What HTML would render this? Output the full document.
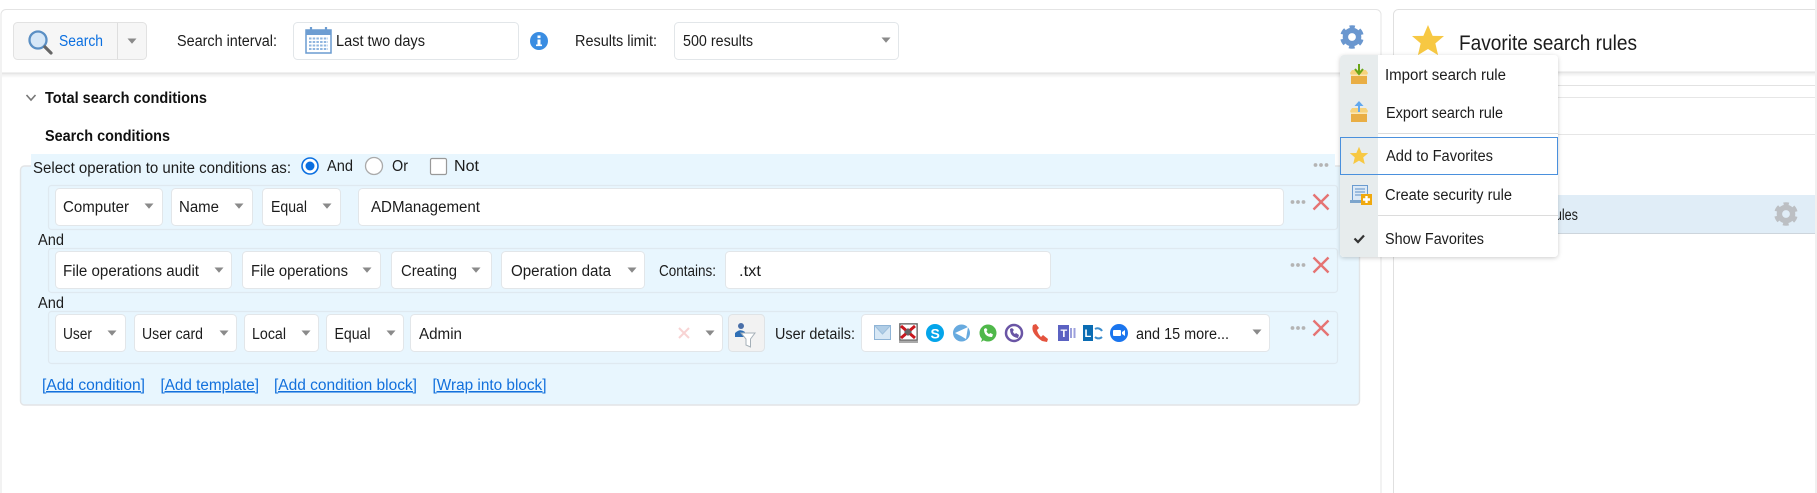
<!DOCTYPE html>
<html><head><meta charset="utf-8"><style>
html,body{margin:0;padding:0;background:#fff;width:1817px;height:493px;overflow:hidden}
svg{display:block}
text{font-family:"Liberation Sans",sans-serif;font-size:15.5px;fill:#1c1c1c}
.b{font-weight:bold;fill:#111}
.l{fill:#1270dc;text-decoration:underline}
.s{fill:#fff;stroke:#e2e6e9;stroke-width:1}
.a{fill:#8a8a8a}
.r{fill:#e8f6fe;stroke:#dfe9f0;stroke-width:1.200}
</style></head><body>
<svg width="1817" height="493" viewBox="0 0 1817 493" xmlns="http://www.w3.org/2000/svg">
<defs>
<linearGradient id="sh" x1="0" y1="0" x2="0" y2="1"><stop offset="0" stop-color="#e8e8e8"/><stop offset="1" stop-color="#fff"/></linearGradient>
<filter id="ms" x="-10%" y="-10%" width="120%" height="120%"><feDropShadow dx="0" dy="1" stdDeviation="2" flood-color="#000" flood-opacity=".2"/></filter>
<polygon id="star" points="0,-10 2.9,-3.2 10,-3.1 4.6,1.5 6.3,8.8 0,5 -6.3,8.8 -4.6,1.5 -10,-3.1 -2.9,-3.2"/>
<g id="gear"><circle r="6.6" fill="none" stroke-width="5.4" stroke="currentColor"/><circle r="10" fill="none" stroke-width="3.6" stroke="currentColor" stroke-dasharray="5.6 4.87" stroke-dashoffset="2.8" transform="rotate(-90)"/></g>
<g id="x"><path d="M-7.5-7.5L7.5 7.5M7.5-7.5L-7.5 7.5" stroke="#e57373" stroke-width="2.4" fill="none"/></g>
<g id="d"><circle cx="-5.5" r="1.9" fill="#b4b4b4"/><circle r="1.9" fill="#b4b4b4"/><circle cx="5.5" r="1.9" fill="#b4b4b4"/></g>
<polygon id="ar" points="-4.5,-2.5 4.5,-2.5 0,2.8" class="a"/>
<g id="box"><path d="M-9-3L-7-6H7L9-3L8-1H-8Z" fill="#f6d27c"/><rect x="-8" y="-1" width="16" height="9" fill="#e9ae45"/><rect x="-8" y="-1.5" width="16" height="1.5" fill="#fbe6b4"/></g>
</defs>

<!-- left panel -->
<rect x="1" y="9.5" width="1380" height="500" rx="5" fill="#fff" stroke="#e4e4e4"/>
<rect x="2" y="73" width="1378" height="5" fill="url(#sh)"/>
<line x1="2" y1="73" x2="1380" y2="73" stroke="#e0e0e0"/>

<!-- right panel -->
<rect x="1393.5" y="9.5" width="440" height="500" rx="5" fill="#fff" stroke="#e0e0e0"/>
<rect x="1394" y="72" width="421" height="5" fill="url(#sh)"/>
<line x1="1394" y1="72" x2="1815" y2="72" stroke="#e0e0e0"/>
<line x1="1394" y1="85.500" x2="1815" y2="85.500" stroke="#e2e2e2"/>
<line x1="1394" y1="97.500" x2="1815" y2="97.500" stroke="#e6e6e6"/>
<line x1="1394" y1="134.500" x2="1815" y2="134.500" stroke="#e6e6e6"/>
<rect x="1394" y="195" width="421" height="38" fill="#e0edf7"/>
<line x1="1394" y1="233.500" x2="1815" y2="233.500" stroke="#cdd5dc"/>
<rect x="1815" y="0" width="2" height="493" fill="#f0f0f0"/>
<use href="#star" transform="translate(1428,41) scale(1.6)" fill="#f7c843"/>
<text x="1459" y="50" style="font-size:21px" textLength="178" lengthAdjust="spacingAndGlyphs">Favorite search rules</text>
<text x="1531" y="220" textLength="47" lengthAdjust="spacingAndGlyphs">les rules</text>
<use href="#gear" transform="translate(1786,214)" style="color:#bcbfc3"/>

<!-- toolbar -->
<rect x="13.500" y="22.500" width="133" height="37" rx="4" fill="#f6f6f6" stroke="#e2e2e2"/>
<line x1="117.500" y1="23" x2="117.500" y2="59" stroke="#dedede"/>
<circle cx="38" cy="40" r="8.500" fill="#d6e7f7" stroke="#5a8fc4" stroke-width="2.300"/>
<path d="M45 47L51 53" stroke="#666" stroke-width="3.200" stroke-linecap="round"/>
<text x="59" y="46" style="fill:#0b6fe0" textLength="44" lengthAdjust="spacingAndGlyphs">Search</text>
<use href="#ar" x="132" y="41"/>
<text x="177" y="46" textLength="100" lengthAdjust="spacingAndGlyphs">Search interval:</text>
<rect x="293.500" y="22.500" width="225" height="37" rx="4" class="s"/>
<rect x="306" y="30" width="25" height="23" fill="#fff" stroke="#6a9bd0" stroke-width="1.500"/>
<rect x="306" y="30" width="25" height="5" fill="#6d9dd2"/>
<path d="M311 27V33M326 27V33" stroke="#6d9dd2" stroke-width="2.200"/>
<path d="M309 38.500H328M309 42H328M309 45.500H328M309 49H328" stroke="#8fb5df" stroke-width="2" stroke-dasharray="2.500 1.200"/>
<text x="336" y="46" textLength="89" lengthAdjust="spacingAndGlyphs">Last two days</text>
<circle cx="539" cy="41" r="9" fill="#3a8de2"/>
<rect x="537.500" y="39.500" width="3" height="6.500" fill="#fff"/><rect x="537.500" y="35.500" width="3" height="2.600" fill="#fff"/><rect x="536" y="44.500" width="6" height="1.600" fill="#fff"/>
<text x="575" y="46" textLength="82" lengthAdjust="spacingAndGlyphs">Results limit:</text>
<rect x="674.500" y="22.500" width="224" height="37" rx="4" class="s"/>
<text x="683" y="46" textLength="70" lengthAdjust="spacingAndGlyphs">500 results</text>
<use href="#ar" x="886" y="40"/>
<use href="#gear" transform="translate(1352,37)" style="color:#6a97cf"/>

<!-- headers -->
<path d="M26.500 95L31 100L35.500 95" stroke="#777" stroke-width="1.600" fill="none"/>
<text x="45" y="103" class="b" textLength="162" lengthAdjust="spacingAndGlyphs">Total search conditions</text>
<text x="45" y="141" class="b" textLength="125" lengthAdjust="spacingAndGlyphs">Search conditions</text>

<!-- conditions panel -->
<rect x="20.500" y="166" width="1339" height="239" rx="4" fill="#e8f6fe" stroke="#e2e4e6" stroke-width="1.400"/>
<rect x="31" y="154" width="1304" height="14" fill="#e8f6fe"/>
<text x="33" y="173" textLength="258" lengthAdjust="spacingAndGlyphs">Select operation to unite conditions as:</text>
<circle cx="310" cy="166" r="8" fill="#fff" stroke="#0b6fe0" stroke-width="1.600"/><circle cx="310" cy="166" r="4.500" fill="#0b6fe0"/>
<text x="327" y="171" textLength="26" lengthAdjust="spacingAndGlyphs">And</text>
<circle cx="374" cy="166" r="8.500" fill="#fff" stroke="#aaa" stroke-width="1.300"/>
<text x="392" y="171" textLength="16" lengthAdjust="spacingAndGlyphs">Or</text>
<rect x="430.500" y="158.500" width="16" height="16" rx="1.500" fill="#fff" stroke="#999" stroke-width="1.200"/>
<text x="454" y="171" textLength="25" lengthAdjust="spacingAndGlyphs">Not</text>
<use href="#d" x="1321" y="165"/>

<!-- row 1 -->
<rect x="48.500" y="185.500" width="1289" height="44" rx="3" class="r"/>
<rect x="55.500" y="188.500" width="107" height="37" rx="4" class="s"/><text x="63" y="212" textLength="66" lengthAdjust="spacingAndGlyphs">Computer</text><use href="#ar" x="149" y="206"/>
<rect x="171.500" y="188.500" width="81" height="37" rx="4" class="s"/><text x="179" y="212" textLength="40" lengthAdjust="spacingAndGlyphs">Name</text><use href="#ar" x="239" y="206"/>
<rect x="262.500" y="188.500" width="78" height="37" rx="4" class="s"/><text x="271" y="212" textLength="36" lengthAdjust="spacingAndGlyphs">Equal</text><use href="#ar" x="327" y="206"/>
<rect x="358.500" y="188.500" width="925" height="37" rx="4" class="s"/><text x="371" y="212" textLength="109" lengthAdjust="spacingAndGlyphs">ADManagement</text>
<use href="#d" x="1298" y="202"/><use href="#x" x="1321" y="202"/>
<text x="38" y="245" textLength="26" lengthAdjust="spacingAndGlyphs">And</text>

<!-- row 2 -->
<rect x="48.500" y="248.500" width="1289" height="44" rx="3" class="r"/>
<rect x="55.500" y="251.500" width="176" height="37" rx="4" class="s"/><text x="63" y="276" textLength="136" lengthAdjust="spacingAndGlyphs">File operations audit</text><use href="#ar" x="219" y="270"/>
<rect x="242.500" y="251.500" width="138" height="37" rx="4" class="s"/><text x="251" y="276" textLength="97" lengthAdjust="spacingAndGlyphs">File operations</text><use href="#ar" x="367" y="270"/>
<rect x="391.500" y="251.500" width="100" height="37" rx="4" class="s"/><text x="401" y="276" textLength="56" lengthAdjust="spacingAndGlyphs">Creating</text><use href="#ar" x="476" y="270"/>
<rect x="501.500" y="251.500" width="143" height="37" rx="4" class="s"/><text x="511" y="276" textLength="100" lengthAdjust="spacingAndGlyphs">Operation data</text><use href="#ar" x="632" y="270"/>
<text x="659" y="276" textLength="57" lengthAdjust="spacingAndGlyphs">Contains:</text>
<rect x="725.500" y="251.500" width="325" height="37" rx="4" class="s"/><text x="739" y="276" textLength="22" lengthAdjust="spacingAndGlyphs">.txt</text>
<use href="#d" x="1298" y="265"/><use href="#x" x="1321" y="265"/>
<text x="38" y="308" textLength="26" lengthAdjust="spacingAndGlyphs">And</text>

<!-- row 3 -->
<rect x="48.500" y="311.500" width="1289" height="52" rx="3" class="r"/>
<rect x="55.500" y="314.500" width="70" height="37" rx="4" class="s"/><text x="63" y="339" textLength="29" lengthAdjust="spacingAndGlyphs">User</text><use href="#ar" x="112" y="333"/>
<rect x="134.500" y="314.500" width="102" height="37" rx="4" class="s"/><text x="142" y="339" textLength="61" lengthAdjust="spacingAndGlyphs">User card</text><use href="#ar" x="224" y="333"/>
<rect x="244.500" y="314.500" width="74" height="37" rx="4" class="s"/><text x="252" y="339" textLength="34" lengthAdjust="spacingAndGlyphs">Local</text><use href="#ar" x="306" y="333"/>
<rect x="326.500" y="314.500" width="77" height="37" rx="4" class="s"/><text x="334.500" y="339" textLength="36" lengthAdjust="spacingAndGlyphs">Equal</text><use href="#ar" x="391" y="333"/>
<rect x="410.500" y="314.500" width="312" height="37" rx="4" class="s"/><text x="419" y="339" textLength="43" lengthAdjust="spacingAndGlyphs">Admin</text>
<path d="M679 328L689 338M689 328L679 338" stroke="#f8d3d3" stroke-width="2" fill="none"/>
<use href="#ar" x="710" y="333"/>
<rect x="728.500" y="314.500" width="36" height="37" rx="4" fill="#f2f2f2" stroke="#dfe3e6"/>
<circle cx="741" cy="326" r="3" fill="#4a6fa8"/><path d="M735 337V333Q740 328 745 332L744 337Z" fill="#2f6fb5"/>
<path d="M741 333H755L750.500 339V347L746 345V339Z" fill="#fff" stroke="#a5b0b8"/>
<text x="775" y="339" textLength="80" lengthAdjust="spacingAndGlyphs">User details:</text>
<rect x="861.500" y="314.500" width="408" height="37" rx="4" class="s"/>
<!-- messenger icons -->
<rect x="874.500" y="325.500" width="16" height="14" fill="#d8e8f5" stroke="#8fb4d6"/><path d="M875 326L882.500 334L890 326" fill="#b0cde6" stroke="#9dbfdc"/>
<rect x="899" y="323" width="19" height="20" fill="#aaa"/><rect x="900" y="324" width="17" height="16" fill="#fff" stroke="#555"/><path d="M901 338L915 326M901 326L915 338" stroke="#c9171e" stroke-width="3"/><path d="M904 332L908 328L912 332L908 336Z" fill="#666"/>
<circle cx="935" cy="333" r="9" fill="#04a5ea"/><text x="930.500" y="338.500" style="font-size:14px;font-weight:bold;fill:#fff">S</text>
<circle cx="961.500" cy="333" r="8.500" fill="#67aadf"/><path d="M955 333L968 327L966 339L961 336Z" fill="#fff"/>
<circle cx="988" cy="333" r="8.500" fill="#4fb84a"/><path d="M981 342L983 336L986 339Z" fill="#4fb84a"/><path d="M984 329Q984 337 992 337L993 334.500L990.500 333L989 334Q987 333 986.500 331L987.500 330L986 328Z" fill="#fff"/>
<circle cx="1014" cy="333" r="8" fill="#fff" stroke="#6a55a5" stroke-width="2.500"/><path d="M1010 329Q1010 337 1018 338L1019 335L1016 333L1015 334Q1013 333 1013 331L1014 330L1012 328Z" fill="#6a55a5"/>
<path d="M1033 325Q1030 333 1042 341L1047 342L1048 339L1043 335L1041 337Q1038 334 1037 330L1039 328L1036 324Z" fill="#e4533e"/>
<rect x="1058" y="325" width="11" height="16" fill="#5b62c2"/><text x="1060.500" y="337" style="font-size:11px;font-weight:bold;fill:#fff">T</text><path d="M1071 328V338M1074.500 328V338" stroke="#9ca0dc" stroke-width="2"/>
<rect x="1083" y="325" width="10" height="16" fill="#0a6cb3"/><text x="1084.500" y="337" style="font-size:11px;font-weight:bold;fill:#fff">L</text><path d="M1095 329A5 5 0 0 1 1102 331M1102 337A5 5 0 0 1 1095 337" fill="none" stroke="#3c8dcc" stroke-width="2"/>
<circle cx="1119" cy="333" r="9" fill="#1a75ee"/><rect x="1113" y="330" width="8" height="6" rx="1" fill="#fff"/><path d="M1122 332L1125 330V336L1122 334Z" fill="#fff"/>
<text x="1136" y="339" textLength="93" lengthAdjust="spacingAndGlyphs">and 15 more...</text>
<use href="#ar" x="1257" y="332"/>
<use href="#d" x="1298" y="328"/><use href="#x" x="1321" y="328"/>

<!-- links -->
<text x="42" y="390" class="l" textLength="103" lengthAdjust="spacingAndGlyphs">[Add condition]</text>
<text x="160.500" y="390" class="l" textLength="98.500" lengthAdjust="spacingAndGlyphs">[Add template]</text>
<text x="274" y="390" class="l" textLength="143" lengthAdjust="spacingAndGlyphs">[Add condition block]</text>
<text x="432.500" y="390" class="l" textLength="114" lengthAdjust="spacingAndGlyphs">[Wrap into block]</text>

<!-- menu -->
<rect x="1340" y="55" width="218" height="202" rx="4" fill="#fff" filter="url(#ms)"/>
<path d="M1378 55H1344A4 4 0 0 0 1340 59V253A4 4 0 0 0 1344 257H1378Z" fill="#e7eced"/>
<line x1="1378" y1="133.500" x2="1558" y2="133.500" stroke="#dcdcdc"/>
<line x1="1378" y1="215.500" x2="1558" y2="215.500" stroke="#dcdcdc"/>
<rect x="1340.500" y="137.500" width="217" height="37" fill="#fff" fill-opacity="0" stroke="#4a90dd"/>
<use href="#box" x="1359" y="76"/><path d="M1359 64V73M1355 69L1359 74L1363 69" stroke="#6aa517" stroke-width="2" fill="none"/>
<use href="#box" x="1359" y="114"/><path d="M1359 112V104" stroke="#62a8ee" stroke-width="2"/><path d="M1354.500 106L1359 101L1363.500 106Z" fill="#62a8ee"/>
<use href="#star" transform="translate(1359,156) scale(.92)" fill="#f7c843"/>
<rect x="1352.500" y="185.500" width="15" height="15" fill="#dce9f6" stroke="#6a9bd0"/><rect x="1350" y="200" width="19" height="3" fill="#7da5cc"/><path d="M1355 189H1365M1355 192H1365M1355 195H1362" stroke="#5b90c7"/>
<rect x="1361" y="194" width="11" height="11" fill="#f0a90f"/><path d="M1366.500 196V203M1363 199.500H1370" stroke="#fff" stroke-width="2.400"/>
<path d="M1354.500 238.500L1358 242L1364 235.500" stroke="#333" stroke-width="2.200" fill="none"/>
<text x="1385" y="80" textLength="121" lengthAdjust="spacingAndGlyphs">Import search rule</text>
<text x="1386" y="118" textLength="117" lengthAdjust="spacingAndGlyphs">Export search rule</text>
<text x="1386" y="161" textLength="107" lengthAdjust="spacingAndGlyphs">Add to Favorites</text>
<text x="1385" y="200" textLength="127" lengthAdjust="spacingAndGlyphs">Create security rule</text>
<text x="1385" y="244" textLength="99" lengthAdjust="spacingAndGlyphs">Show Favorites</text>
</svg>
</body></html>
